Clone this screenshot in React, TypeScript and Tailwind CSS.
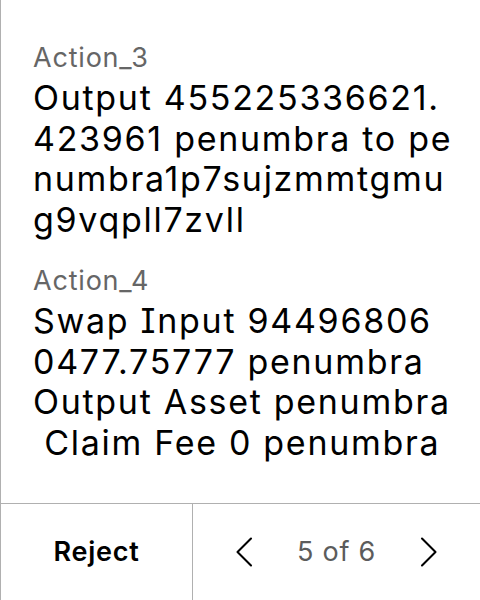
import React from "react";

function Chevron({ dir }: { dir: "left" | "right" }) {
  return (
    <svg width="18" height="30" viewBox="0 0 18 30" fill="none" className="shrink-0">
      {dir === "left" ? (
        <polyline points="16,1.5 2.5,15 16,28.5" stroke="#000" strokeWidth="2.1" strokeLinecap="round" strokeLinejoin="round" />
      ) : (
        <polyline points="2,1.5 15.5,15 2,28.5" stroke="#000" strokeWidth="2.1" strokeLinecap="round" strokeLinejoin="round" />
      )}
    </svg>
  );
}

function Field({ label, lines }: { label: string; lines: string[] }) {
  return (
    <div className="flex flex-col">
      <div className="text-[27px] leading-[32px] tracking-[0.8px] text-[#666666]">{label}</div>
      <div className="mt-[4px] flex flex-col text-[34px] leading-[40.5px] tracking-[1.7px] text-black">
        {lines.map((l, i) => (
          <span key={i} className="whitespace-pre">
            {l}
          </span>
        ))}
      </div>
    </div>
  );
}

export default function App() {
  return (
    <div className="w-[480px] h-[600px] flex flex-col bg-white border-l border-[#b0b0b0] overflow-hidden font-[Inter,'Noto_Sans',sans-serif] [font-feature-settings:'cv08']">
      <div className="flex-1 flex flex-col gap-[25px] pl-[32px] pr-[28px] pt-[42px]">
        <Field
          label="Action_3"
          lines={["Output 455225336621.", "423961 penumbra to pe", "numbra1p7sujzmmtgmu", "g9vqpll7zvll"]}
        />
        <Field
          label="Action_4"
          lines={["Swap Input 94496806", "0477.75777 penumbra", "Output Asset penumbra", " Claim Fee 0 penumbra"]}
        />
      </div>
      <div className="h-[97px] flex border-t border-[#b0b0b0]">
        <div className="w-[192px] shrink-0 flex items-center justify-center border-r border-[#b0b0b0]">
          <span className="text-[27px] font-semibold tracking-[0.75px] text-black">Reject</span>
        </div>
        <div className="flex-1 flex items-center justify-center gap-[44px]">
          <Chevron dir="left" />
          <span className="text-[27px] tracking-[0.75px] text-[#5c5c5c]">5 of 6</span>
          <Chevron dir="right" />
        </div>
      </div>
    </div>
  );
}
